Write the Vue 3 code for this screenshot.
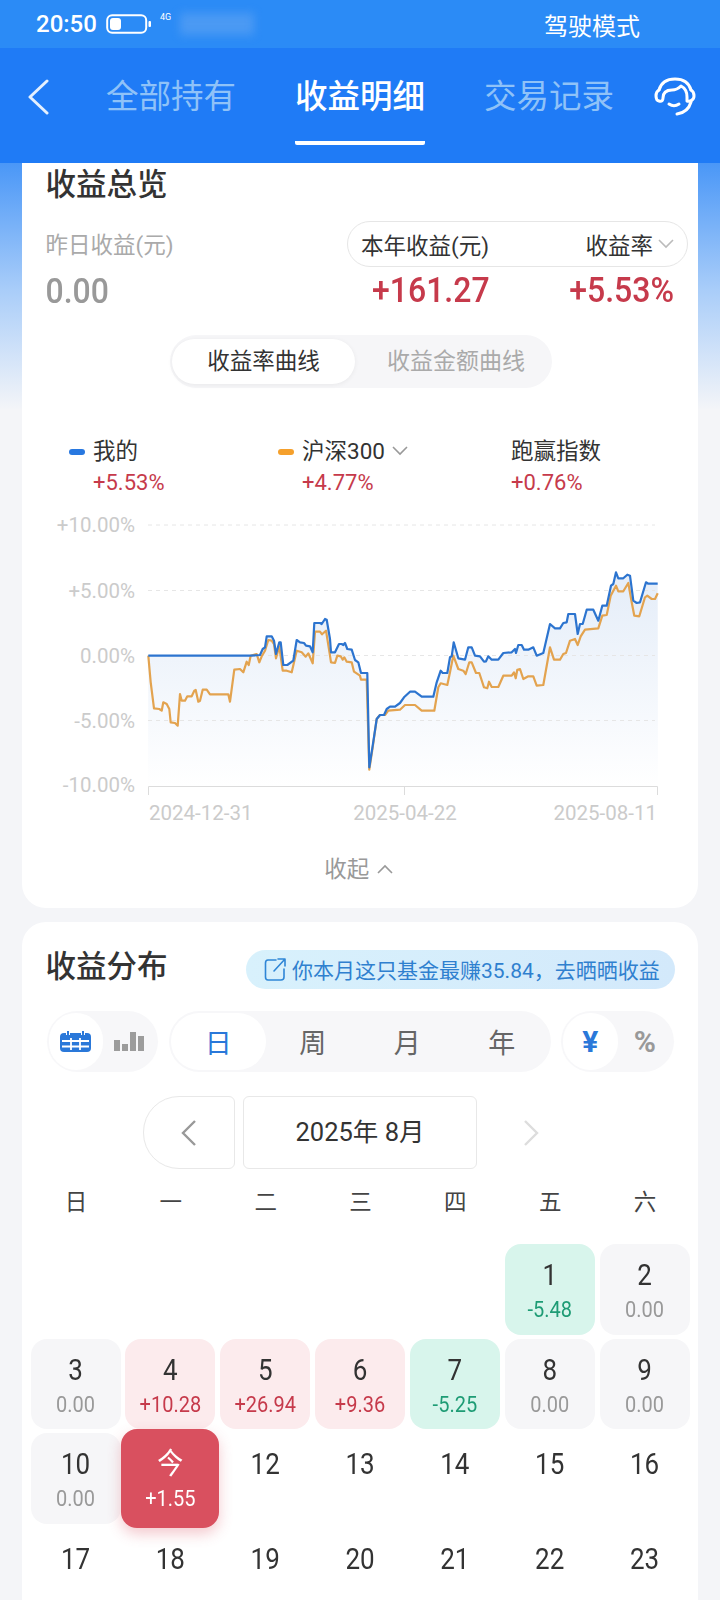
<script setup>
import { computed } from 'vue'

const z5 = (p) => [130 + p[0] / 3, 560 + p[1] / 3]
const z6 = (p) => [400 + p[0] / 3, 560 + p[1] / 3]

const blueLeft = [[55,290],[360,290],[390,288],[398,270],[405,265],[410,232],[425,232],[432,245],[438,285],[448,250],[452,250],[460,318],[472,318],[490,305],[500,243],[510,250],[522,252],[528,260],[540,262],[548,280],[553,192],[570,192],[575,195],[585,180],[590,182],[600,240],[603,280],[615,280],[627,255],[635,255],[640,258],[645,252],[652,270],[665,272],[675,303],[685,310],[693,342],[712,342],[718,625],[728,560],[740,480],[750,468],[762,468],[770,450],[780,443],[795,443],[810,432]]
const blueRight = [[12,415],[30,398],[45,398],[65,413],[100,413],[110,370],[122,335],[128,342],[142,342],[150,295],[155,292],[161,250],[175,298],[195,302],[205,265],[215,265],[225,290],[240,292],[252,308],[258,307],[265,292],[275,302],[295,302],[310,282],[335,280],[345,270],[348,282],[355,258],[365,258],[372,272],[385,272],[400,265],[410,290],[430,282],[450,195],[465,208],[480,208],[490,192],[500,190],[505,165],[525,165],[533,225],[540,195],[548,195],[560,152],[580,152],[595,185],[607,140],[620,140],[633,80],[640,75],[648,40],[655,58],[670,58],[682,47],[690,50],[700,125],[710,132],[720,130],[738,70],[745,74],[773,74]]
const orangeLeft = [[55,290],[62,370],[72,448],[88,450],[95,455],[100,430],[110,435],[118,450],[122,490],[135,492],[143,500],[150,405],[155,425],[165,425],[172,412],[185,412],[193,395],[197,393],[205,428],[210,425],[218,392],[230,392],[240,406],[295,406],[300,428],[313,332],[330,330],[340,340],[350,308],[356,318],[362,290],[380,285],[388,310],[395,292],[405,275],[415,243],[425,245],[432,255],[438,298],[448,262],[458,335],[470,335],[485,340],[500,275],[515,280],[527,293],[535,283],[548,313],[555,218],[570,218],[576,226],[588,215],[600,290],[603,310],[615,312],[622,290],[632,292],[638,302],[643,295],[650,308],[665,310],[672,338],[690,350],[693,362],[710,362],[718,632],[728,565],[740,480],[750,468],[765,468],[775,455],[810,452]]
const orangeRight = [[15,438],[45,438],[65,455],[103,455],[115,385],[122,373],[142,378],[150,340],[160,290],[175,330],[190,335],[197,345],[208,310],[215,310],[228,342],[238,342],[252,385],[262,388],[267,368],[275,384],[295,384],[310,350],[335,350],[342,340],[347,358],[352,332],[360,330],[370,360],[385,352],[400,352],[410,380],[430,378],[450,265],[462,302],[480,302],[490,285],[498,282],[510,245],[525,240],[533,258],[542,232],[555,212],[595,208],[607,170],[620,168],[632,110],[648,80],[655,97],[670,97],[685,72],[695,130],[703,170],[718,172],[735,115],[742,110],[755,120],[765,120],[773,103]]

const toLine = (pts) => pts.map((p) => `${p[0].toFixed(1)},${p[1].toFixed(1)}`).join(' ')
const bluePts = [...blueLeft.map(z5), ...blueRight.map(z6)]
const orangePts = [...orangeLeft.map(z5), ...orangeRight.map(z6)]
const blueLine = toLine(bluePts)
const orangeLine = toLine(orangePts)
const areaLine = computed(() => `${blueLine} 658,787 148,787`)

const gridLines = [
  { label: '+10.00%', y: 526 },
  { label: '+5.00%', y: 591.5 },
  { label: '0.00%', y: 656.5 },
  { label: '-5.00%', y: 721.5 },
  { label: '-10.00%', y: 786 }
]

const legends = [
  { name: '我的', value: '+5.53%', color: '#2878e0' },
  { name: '沪深300', value: '+4.77%', color: '#f5a02c', arrow: true },
  { name: '跑赢指数', value: '+0.76%' }
]

const weekdays = ['日', '一', '二', '三', '四', '五', '六']

const days = [
  ...Array.from({ length: 5 }, () => ({ empty: true })),
  { day: 1, value: '-5.48', tone: 'down' },
  { day: 2, value: '0.00', tone: 'flat' },
  { day: 3, value: '0.00', tone: 'flat' },
  { day: 4, value: '+10.28', tone: 'up' },
  { day: 5, value: '+26.94', tone: 'up' },
  { day: 6, value: '+9.36', tone: 'up' },
  { day: 7, value: '-5.25', tone: 'down' },
  { day: 8, value: '0.00', tone: 'flat' },
  { day: 9, value: '0.00', tone: 'flat' },
  { day: 10, value: '0.00', tone: 'flat' },
  { day: '今', value: '+1.55', tone: 'today' },
  ...[12, 13, 14, 15, 16, 17, 18, 19, 20, 21, 22, 23].map((day) => ({ day }))
]
</script>

<template>
  <div class="page">
    <div class="status-bar">
      <span class="time">20:50</span>
      <svg class="battery" width="46" height="20" viewBox="0 0 46 20">
        <rect x="1.2" y="1.2" width="39" height="17.6" rx="5" fill="none" stroke="#fff" stroke-width="2" />
        <rect x="4" y="4" width="11" height="12" rx="3" fill="#fff" />
        <rect x="42.5" y="7" width="2.5" height="6" rx="1" fill="#fff" />
      </svg>
      <span class="net">4G</span>
      <span class="smudge"></span>
      <span class="drive">驾驶模式</span>
    </div>

    <header class="nav">
      <svg class="back" width="24" height="36" viewBox="0 0 24 36">
        <path d="M21 2 L4 18 L21 34" fill="none" stroke="#e4f0fe" stroke-width="3" stroke-linecap="round" stroke-linejoin="round" />
      </svg>
      <div class="tabs">
        <span class="tab">全部持有</span>
        <span class="tab active">收益明细</span>
        <span class="tab">交易记录</span>
      </div>
      <svg class="service" width="42" height="39" viewBox="0 0 42 39" fill="none" stroke="#fff" stroke-width="3" stroke-linecap="round" stroke-linejoin="round">
        <path d="M5 13 C7 6 13 2 21 2 C29 2 35 6 37 13" />
        <path d="M5 13 C1 15 1 23 5 24 C8 25 9 23 9 21 C9 16 12 13 18 13 C22 13 25 11 27 9 C31 11 33 15 33 20 V24 C36 25 40 23 40 19 C40 16 39 14 37 13" />
        <path d="M37 25 C35 32 30 36 23 37" />
        <path d="M15 27 C18 29 22 29 25 27" />
      </svg>
    </header>

    <main class="content">
      <section class="card overview">
        <h2 class="card-title">收益总览</h2>
        <div class="summary">
          <div class="summary-left">
            <div class="muted-label">昨日收益(元)</div>
            <div class="big-num grey">0.00</div>
          </div>
          <div class="summary-right">
            <div class="range-pill">
              <span>本年收益(元)</span>
              <span class="range-rate">
                收益率
                <svg width="16" height="10" viewBox="0 0 16 10">
                  <path d="M1 1 L8 8 L15 1" fill="none" stroke="#bbb" stroke-width="1.6" />
                </svg>
              </span>
            </div>
            <div class="summary-values">
              <span class="big-num red">+161.27</span>
              <span class="big-num red">+5.53%</span>
            </div>
          </div>
        </div>

        <div class="curve-switch">
          <span class="curve-item on">收益率曲线</span>
          <span class="curve-item off">收益金额曲线</span>
        </div>

        <div class="legend">
          <div v-for="item in legends" :key="item.name" class="legend-item">
            <div class="legend-name">
              <i v-if="item.color" class="dash" :style="{ background: item.color }"></i>
              {{ item.name }}
              <svg v-if="item.arrow" class="legend-arrow" width="16" height="10" viewBox="0 0 16 10">
                <path d="M1 1 L8 8 L15 1" fill="none" stroke="#999" stroke-width="1.6" />
              </svg>
            </div>
            <div class="legend-value">{{ item.value }}</div>
          </div>
        </div>

        <svg class="chart" width="676" height="340" viewBox="22 510 676 340">
          <defs>
            <linearGradient id="area" gradientUnits="userSpaceOnUse" x1="0" y1="590" x2="0" y2="787">
              <stop offset="0" stop-color="#e6eef9" />
              <stop offset="1" stop-color="#ffffff" />
            </linearGradient>
          </defs>
          <polygon :points="areaLine" fill="url(#area)" />
          <g v-for="line in gridLines" :key="line.label">
            <line v-if="line.y < 780" x1="148" x2="655" :y1="line.y" :y2="line.y" stroke="#e6e6e6" stroke-width="1" stroke-dasharray="4 4" />
            <text x="135" :y="line.y + 7" text-anchor="end" class="axis-text">{{ line.label }}</text>
          </g>
          <path d="M148.5 796 V787.5 H657.5 V796 M404.5 787.5 V796" fill="none" stroke="#dcdcdc" stroke-width="1" />
          <polyline :points="orangeLine" fill="none" stroke="#e3a34f" stroke-width="2.2" stroke-linejoin="round" />
          <polyline :points="blueLine" fill="none" stroke="#2c74cf" stroke-width="2.2" stroke-linejoin="round" />
          <text x="149" y="821" class="axis-text">2024-12-31</text>
          <text x="405" y="821" text-anchor="middle" class="axis-text">2025-04-22</text>
          <text x="657" y="821" text-anchor="end" class="axis-text">2025-08-11</text>
        </svg>

        <div class="collapse">
          收起
          <svg width="16" height="10" viewBox="0 0 16 10">
            <path d="M1 9 L8 2 L15 9" fill="none" stroke="#999" stroke-width="1.6" />
          </svg>
        </div>
      </section>

      <section class="card dist">
        <div class="dist-head">
          <h2 class="card-title">收益分布</h2>
          <div class="share-pill">
            <svg width="23" height="24" viewBox="0 0 23 24" fill="none" stroke="#2f86d6" stroke-width="1.6" stroke-linecap="round" stroke-linejoin="round">
              <path d="M12 3 H4 Q1.5 3 1.5 6 V20 Q1.5 23 4 23 H17 Q20 23 20 20 V12" />
              <path d="M10 14 L21 2 M14 2 H21 V9" />
            </svg>
            <span>你本月这只基金最赚35.84，去晒晒收益</span>
          </div>
        </div>

        <div class="controls">
          <div class="seg seg-icons">
            <span class="seg-btn on">
              <svg width="31" height="21" viewBox="0 0 31 21">
                <path d="M4 2 H27 Q31 2 31 6 V17 Q31 21 27 21 H4 Q0 21 0 17 V6 Q0 2 4 2 Z" fill="#2a78d9" />
                <path d="M2 10 H29 M2 15.5 H29 M11 7 V19 M20 7 V19" stroke="#fff" stroke-width="1.8" />
                <path d="M8 0 V4 M23 0 V4" stroke="#fff" stroke-width="4" />
                <path d="M8 0 V3.5 M23 0 V3.5" stroke="#2a78d9" stroke-width="2" stroke-linecap="round" />
              </svg>
            </span>
            <span class="seg-btn">
              <svg width="30" height="19" viewBox="0 0 30 19" fill="#9c9c9c">
                <rect x="0" y="8" width="6" height="11" />
                <rect x="8" y="12" width="6" height="7" />
                <rect x="16" y="0" width="6" height="19" />
                <rect x="24" y="4" width="6" height="15" />
              </svg>
            </span>
          </div>
          <div class="seg seg-range">
            <span class="seg-btn on blue-text">日</span>
            <span class="seg-btn">周</span>
            <span class="seg-btn">月</span>
            <span class="seg-btn">年</span>
          </div>
          <div class="seg seg-unit">
            <span class="seg-btn on unit blue-text">¥</span>
            <span class="seg-btn unit grey">%</span>
          </div>
        </div>

        <div class="month-nav">
          <button class="month-prev">
            <svg width="18" height="28" viewBox="0 0 18 28">
              <path d="M15 2 L3 14 L15 26" fill="none" stroke="#999" stroke-width="2.4" />
            </svg>
          </button>
          <div class="month-label">2025年 8月</div>
          <div class="month-next">
            <svg width="18" height="28" viewBox="0 0 18 28">
              <path d="M3 2 L15 14 L3 26" fill="none" stroke="#ddd" stroke-width="2.4" />
            </svg>
          </div>
        </div>

        <div class="week">
          <span v-for="name in weekdays" :key="name">{{ name }}</span>
        </div>

        <div class="days">
          <div v-for="(cell, index) in days" :key="index" class="day" :class="cell.tone">
            <template v-if="!cell.empty">
              <span class="day-num">{{ cell.day }}</span>
              <span v-if="cell.value" class="day-val">{{ cell.value }}</span>
            </template>
          </div>
        </div>
      </section>
    </main>
  </div>
</template>

<style>
html,
body {
  margin: 0;
  background: #f4f5f8;
}
</style>

<style scoped>
* {
  box-sizing: border-box;
}

.page {
  width: 720px;
  height: 1600px;
  overflow: hidden;
  font-family: Roboto, "Noto Sans CJK SC", sans-serif;
  color: #333;
  background: linear-gradient(#4a97f7 163px, #a9cdf9 290px, #f4f5f8 410px);
}

.status-bar {
  height: 48px;
  background: #2b8bf6;
  display: flex;
  align-items: center;
  padding-left: 36px;
  color: #fff;
}

.time {
  font-size: 24px;
  font-weight: 500;
  width: 70px;
}

.battery {
  margin-right: 8px;
}

.net {
  font-size: 9px;
  align-self: flex-start;
  margin-top: 12px;
  width: 20px;
}

.smudge {
  width: 74px;
  height: 22px;
  background: rgba(150, 190, 240, 0.3);
  filter: blur(5px);
}

.drive {
  font-size: 24px;
  margin-left: auto;
  margin-right: 80px;
}

.nav {
  height: 115px;
  background: #1f7bf6;
  display: flex;
  align-items: flex-start;
  position: relative;
}

.back {
  margin: 31px 0 0 26px;
}

.tabs {
  display: flex;
  gap: 59px;
  margin-left: 56px;
}

.tab {
  font-size: 32.5px;
  line-height: 46px;
  padding-top: 26px;
  height: 97px;
  width: 130px;
  color: #8fc2f8;
  text-align: center;
  white-space: nowrap;
}

.tab.active {
  color: #fff;
  font-weight: 500;
  border-bottom: 4px solid #fff;
  border-radius: 0 0 2px 2px;
}

.service {
  margin: 29px 0 0 40px;
}

.content {
  padding: 0 22px;
  display: flex;
  flex-direction: column;
  gap: 14px;
}

.card {
  background: #fff;
  width: 676px;
}

.overview {
  height: 745px;
  border-radius: 0 0 24px 24px;
  padding: 0 10px 0 23.5px;
}

.card-title {
  margin: 0;
  font-size: 30.5px;
  line-height: 44px;
  font-weight: 500;
  color: #333;
}

.summary {
  display: flex;
  justify-content: space-between;
  margin-top: 14px;
}

.summary-left {
  padding-top: 6px;
}

.muted-label {
  font-size: 22.5px;
  line-height: 36px;
  color: #aaa;
}

.big-num {
  display: inline-block;
  font-size: 32px;
  line-height: 40px;
  font-weight: 500;
  transform: scaleY(1.12);
}

.summary-left .big-num {
  margin-top: 8px;
}

.grey {
  color: #999;
}

.red {
  color: #c63a4b;
}

.summary-right {
  width: 341px;
}

.range-pill {
  height: 46px;
  border: 1px solid #e6e6e6;
  border-radius: 23px;
  display: flex;
  justify-content: space-between;
  align-items: center;
  padding: 0 13px;
  font-size: 22.5px;
}

.range-rate {
  display: flex;
  align-items: center;
  gap: 5px;
}

.summary-values {
  display: flex;
  justify-content: space-between;
  padding: 3px 14px 0 25px;
}

.curve-switch {
  width: 382px;
  height: 53px;
  margin: 24px 0 0 124.5px;
  padding: 4px 2px;
  background: #f6f6f8;
  border-radius: 27px;
  display: flex;
  font-size: 22.5px;
  color: #aaa;
}

.curve-item {
  flex: 1;
  display: flex;
  align-items: center;
  justify-content: center;
  white-space: nowrap;
  padding-bottom: 5px;
}

.curve-item.off {
  font-size: 23px;
  padding-left: 7px;
}

.curve-item.on {
  flex: 0 0 183px;
  background: #fff;
  color: #333;
  border-radius: 23px;
  box-shadow: 0 1px 5px rgba(0, 0, 0, 0.06);
}

.legend {
  display: flex;
  margin: 46px 0 0 47.5px;
}

.legend-item {
  flex: 0 0 209px;
}

.legend-name {
  font-size: 22.5px;
  line-height: 34px;
  position: relative;
  color: #333;
}

.dash {
  position: absolute;
  left: -24px;
  top: 15px;
  width: 16px;
  height: 6px;
  border-radius: 3px;
}

.legend-arrow {
  margin-left: 1px;
  vertical-align: 3px;
}

.legend-value {
  font-size: 22px;
  line-height: 30px;
  color: #c63a4b;
}

.chart {
  display: block;
  margin: 11px 0 0 -23.5px;
}

.axis-text {
  font-size: 20.5px;
  fill: #cbcbcb;
}

.collapse {
  margin-top: 2px;
  font-size: 22.5px;
  line-height: 36px;
  color: #999;
  display: flex;
  align-items: center;
  justify-content: center;
  gap: 8px;
  padding-right: 16px;
}

.dist {
  border-radius: 24px 24px 0 0;
  padding: 23px 0 0;
  height: 760px;
}

.dist-head {
  display: flex;
  justify-content: space-between;
  align-items: center;
  padding: 0 23px 0 23.5px;
}

.share-pill {
  width: 429px;
  height: 39px;
  margin-top: 4px;
  border-radius: 20px;
  background: linear-gradient(90deg, #d8f1fc, #d3e9fb);
  display: flex;
  align-items: center;
  gap: 5px;
  padding-left: 18px;
  font-size: 21px;
  color: #2f80cf;
  white-space: nowrap;
}

.controls {
  display: flex;
  gap: 11px;
  padding-left: 25px;
  margin-top: 22px;
}

.seg {
  height: 61px;
  border-radius: 31px;
  background: #f7f7f9;
  display: flex;
  align-items: center;
  padding: 0 2px;
  font-size: 27px;
  color: #666;
}

.seg-icons {
  width: 111px;
}

.seg-range {
  width: 382px;
}

.seg-unit {
  width: 113px;
  margin-left: -1px;
}

.seg-btn {
  flex: 1;
  height: 57px;
  display: flex;
  align-items: center;
  justify-content: center;
}

.seg-btn.on {
  background: #fff;
  border-radius: 29px;
}

.blue-text {
  color: #2a78d9;
}

.unit {
  font-size: 30px;
  font-weight: 700;
}

.month-nav {
  display: flex;
  gap: 8px;
  margin: 24px 0 0 121px;
}

.month-prev,
.month-label {
  height: 73px;
  background: #fff;
  border: 1px solid #e8e8e8;
}

.month-prev {
  width: 92px;
  padding: 0;
  border-radius: 36px 6px 6px 36px;
  display: flex;
  align-items: center;
  justify-content: center;
}

.month-label {
  width: 234px;
  border-radius: 6px;
  text-align: center;
  font-size: 25.5px;
  line-height: 71px;
  color: #333;
}

.month-next {
  width: 92px;
  display: flex;
  align-items: center;
  justify-content: center;
}

.week {
  display: grid;
  grid-template-columns: repeat(7, 90px);
  column-gap: 4.85px;
  padding-left: 9px;
  margin-top: 15px;
  font-size: 22.5px;
  line-height: 36px;
  text-align: center;
  color: #444;
}

.days {
  display: grid;
  grid-template-columns: repeat(7, 90px);
  grid-auto-rows: 90.5px;
  gap: 4px 4.85px;
  padding-left: 8.5px;
  margin-top: 24px;
}

.day {
  border-radius: 16px;
  display: flex;
  flex-direction: column;
  align-items: center;
  padding-top: 13px;
}

.day-num {
  font-size: 26px;
  line-height: 36px;
  color: #333;
  transform: scaleY(1.12);
}

.day-val {
  font-size: 20px;
  line-height: 26px;
  margin-top: 3px;
  transform: scaleY(1.12);
}

.flat {
  background: #f6f6f8;
}

.flat .day-val {
  color: #999;
}

.up {
  background: #fcebed;
}

.up .day-val {
  color: #c63a4b;
}

.down {
  background: #d8f5ec;
}

.down .day-val {
  color: #1e9c75;
}

.today {
  margin: -4px;
  z-index: 1;
  padding-top: 17px;
  background: #d9505f;
  border-radius: 16px;
  box-shadow: 0 6px 14px rgba(217, 80, 95, 0.3);
}

.today .day-num,
.today .day-val {
  color: #fff;
}
</style>
